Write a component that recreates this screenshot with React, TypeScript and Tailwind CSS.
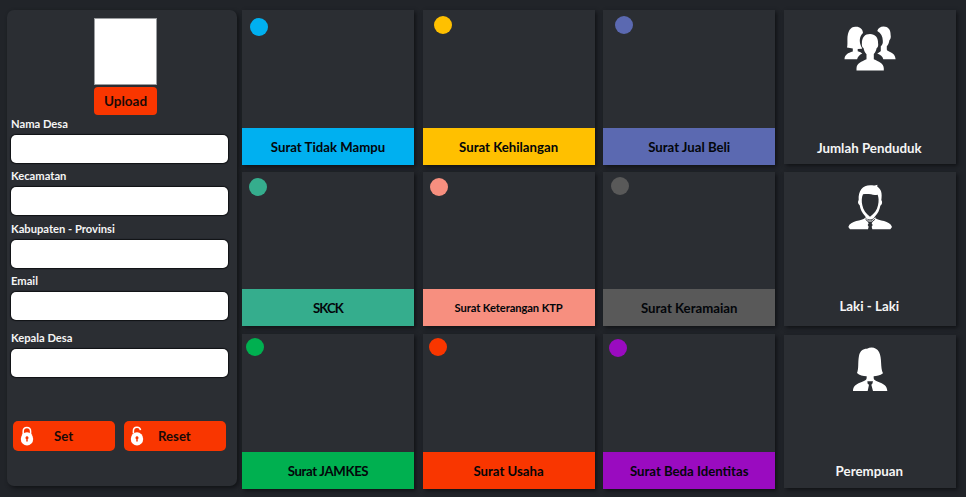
import React from "react";

type Letter = { title: string; card: string; bar: string; dot: string; text?: string };

const columns: Letter[][] = [
  [
    { title: "Surat Tidak Mampu", card: "h-[155px]", bar: "bg-[#00b0f0]", dot: "mt-2 ml-2 bg-[#00b0f0]" },
    { title: "SKCK", card: "h-[154px]", bar: "bg-[#35ad8d]", dot: "mt-1.5 ml-[7px] bg-[#35ad8d]", text: "text-[13.2px] tracking-[-0.9px]" },
    { title: "Surat JAMKES", card: "h-[155px]", bar: "bg-[#00b050]", dot: "mt-1 ml-1 bg-[#00b050]", text: "text-[13.2px] tracking-[-0.35px]" },
  ],
  [
    { title: "Surat Kehilangan", card: "h-[155px]", bar: "bg-[#ffc000]", dot: "mt-1.5 ml-[11.5px] bg-[#ffc000]" },
    { title: "Surat Keterangan KTP", card: "h-[154px]", bar: "bg-[#f78f7f]", dot: "mt-1.5 ml-[7.5px] bg-[#f78f7f]", text: "text-[11.2px] tracking-[-0.1px]" },
    { title: "Surat Usaha", card: "h-[155px]", bar: "bg-[#f93600]", dot: "mt-1 ml-1.5 bg-[#f93600]" },
  ],
  [
    { title: "Surat Jual Beli", card: "h-[155px]", bar: "bg-[#5b69b1]", dot: "mt-1.5 ml-3 bg-[#5b69b1]" },
    { title: "Surat Keramaian", card: "h-[154px]", bar: "bg-[#595959]", dot: "mt-[5px] ml-2 bg-[#595959]" },
    { title: "Surat Beda Identitas", card: "h-[155px]", bar: "bg-[#9a0bc0]", dot: "mt-[5px] ml-[5.5px] bg-[#9a0bc0]" },
  ],
];

function LetterCard({ title, card, bar, dot, text = "text-[13.2px]" }: Letter) {
  return (
    <button className={`flex w-full flex-col bg-[#2b2e33] shadow-[2px_2px_4px_#111316] ${card}`}>
      <span className={`size-[18px] rounded-full ${dot}`} />
      <span className={`mt-auto flex h-[37px] w-full items-center justify-center pt-0.5 font-bold whitespace-nowrap text-[#03060a] ${bar} ${text}`}>
        {title}
      </span>
    </button>
  );
}

function Field({ label, gap }: { label: string; gap: string }) {
  return (
    <label className={`block ${gap}`}>
      <span className="block h-4 text-[11.2px] leading-4 font-bold text-[#f5f5f5]">{label}</span>
      <input className="mt-[3px] -ml-[0.5px] block h-[28px] w-[217px] rounded-[5px] bg-white px-2 text-sm text-black shadow-[0_0_1px_1px_#101215] outline-none" />
    </label>
  );
}

function Padlock({ open = false }: { open?: boolean }) {
  return (
    <svg viewBox="0 0 14 20" className="h-5 w-3.5" fill="none">
      <path
        d={open ? "M3.4 7.5V5C3.4 0.2 10 .2 10.5 4.2" : "M3.2 9V5.2C3.2.1 10.6.1 10.6 5.2V9"}
        stroke="white"
        strokeWidth="1.5"
      />
      <ellipse cx="7" cy="12.9" rx="6.2" ry="6.6" fill="white" />
      <path d="M7 10.3a1.6 1.6 0 0 0-.7 3L6.2 15.6h1.6l-.1-2.3A1.6 1.6 0 0 0 7 10.3Z" fill="#f93600" />
    </svg>
  );
}

function People() {
  return (
    <svg viewBox="0 0 52 45" className="ml-0.5 h-[45px] w-[52px]" fill="white">
      <path d="M.5 33.2c.2-4.4 3.4-6.2 8.3-7.6v-3.1L3 21.6c.6-2.2.4-5 .4-8C3.4 5.5 6.4.8 11.3.8c4.5-.3 7.3 2 7.7 6.2-3.5 3.5-4 8-2.1 12.7.3 1 .6 1.7 1.2 2.2l-.1.8-4.3.4v2.2c2.2.8 3.8 1.3 4.6 2.3-2.8 1.3-4.6 3.3-5.2 5.6Z" />
      <path d="M33.3 4.9C34 2.2 36.5.6 39.6.6c4.4 0 7.1 3 7 8.2l.2 1.7c0 2.1-.9 3.2-1.4 3.7-.5 3-1.4 4.8-2.6 6v3.3c.2 2.8 8.4 1.9 8.8 9.7H39.3c-.6-2.9-2.9-4.6-6.1-5.8 1.4-.8 2.8-1.4 3.6-2.5v-4.7c1.5-1.3 2.3-3.2 2-5.5 0-4.4-1.9-8-5.5-9.8Z" />
      <path d="M12.5 44.5v-2.2c.2-5.3 5.2-6.8 10-9.1v-5c-1.8-1.7-2.6-4.1-3-6.1-1.2-.7-1.9-2.3-1.6-4.6C17.8 11.3 20.9 8 26 8c5.2 0 8.3 3.4 8.1 9.5.4 2.3-.3 3.9-1.5 4.7-.4 2-1.2 4.3-2.8 5.9v5.1c4.8 2.3 9.8 3.9 10 9.1v2.2Z" />
    </svg>
  );
}

function Man() {
  return (
    <svg viewBox="0 0 180 180" className="ml-px size-[60px]" fill="white">
      <path
        fillRule="evenodd"
        d="M59 82C53 77 53 71 56 66C54 40 67 22 91 22C101 22 107 23 112 20L112 26C124 33 127 46 124 66C128 72 127 79 121 83C119 96 113 107 106 114L101 121Q90 128 79 121L75 114C66 105 61 94 59 82ZM69 49C65 57 64 70 67 82C70 97 78 107 90 116C103 107 111 97 114 82C117 68 116 58 113 50C105 52 99 51 93 49C84 48 77 48 69 49Z"
      />
      <path d="M75 112V120C67 129 30 127 25 147L30 154H84L86 146L83 141L86 136L82 130C79 128 76 124 75 120Z" />
      <path d="M106 112V120C114 129 151 127 156 147L151 154H97L95 146L98 141L95 136L99 130C103 128 105 124 106 120Z" />
      <path d="M75 119L86 129H95L106 119" fill="none" stroke="white" strokeWidth="3" />
    </svg>
  );
}

function Woman() {
  return (
    <svg viewBox="0 0 180 180" className="ml-px size-[60px]" fill="white">
      <path d="M51 99C57 84 53 68 57 47C60 33 68 26 81 26C94 19 110 22 117 36C127 55 120 82 129 100C120 107 110 109 101 109V114C102 130 141 123 142 153H39C40 123 79 130 80 114V109C69 108 58 106 51 99Z" />
      <path d="M82 124H99L97 131L94 134L99 153H83L87 134L83 131Z" fill="#2b2e33" />
    </svg>
  );
}

function StatCard({ title, icon, className }: { title: string; icon: React.ReactNode; className: string }) {
  return (
    <section className={`flex w-[172px] flex-col items-center bg-[#2b2e33] pr-px shadow-[2px_2px_4px_#111316] ${className}`}>
      {icon}
      <h2 className="mt-auto text-[13.3px] leading-4 font-bold text-[#f5f5f5]">{title}</h2>
    </section>
  );
}

export default function App() {
  return (
    <main className="flex h-[497px] w-[966px] overflow-hidden bg-[#212429] pt-2.5 pl-[7px] font-['Lato','Liberation_Sans',sans-serif]">
      <aside className="h-[476px] w-[230px] shrink-0 rounded-[7px] bg-[#2b2e33] pl-1 shadow-[2px_2px_4px_#111316]">
        <div className="ml-[83px] flex w-[63px] flex-col gap-0.5 pt-2">
          <div className="h-[67px] border border-[#9b9da0] bg-white" />
          <button className="h-[28px] rounded-[4px] bg-[#f93600] pt-px text-[13.5px] font-bold text-[#190a07]">Upload</button>
        </div>
        <Field label="Nama Desa" gap="mt-px" />
        <Field label="Kecamatan" gap="mt-[5px]" />
        <Field label="Kabupaten - Provinsi" gap="mt-[6px]" />
        <Field label="Email" gap="mt-[5px]" />
        <Field label="Kepala Desa" gap="mt-[10px]" />
        <div className="mt-11 ml-0.5 flex gap-[9px] text-[13.2px] font-bold text-[#190a07]">
          <button className="flex h-[30px] w-[102px] items-center rounded-[5px] bg-[#f93600] pl-[7px]">
            <Padlock />
            <span className="ml-5 pt-px">Set</span>
          </button>
          <button className="flex h-[30px] w-[102px] items-center rounded-[5px] bg-[#f93600] pl-1.5">
            <Padlock open />
            <span className="ml-3.5 pt-px">Reset</span>
          </button>
        </div>
      </aside>
      <div className="ml-[5px] flex gap-[8.6px]">
        {columns.map((letters) => (
          <div key={letters[0].title} className="flex w-[172px] flex-col">
            {letters.map((letter, i) => (
              <div key={letter.title} className={i === 0 ? "" : i === 1 ? "mt-[7px]" : "mt-2"}>
                <LetterCard {...letter} />
              </div>
            ))}
          </div>
        ))}
        <div className="flex flex-col">
          <StatCard title="Jumlah Penduduk" icon={<People />} className="h-[154px] pt-4 pb-2" />
          <StatCard title="Laki - Laki" icon={<Man />} className="mt-2 h-[154px] pt-1.5 pb-3" />
          <StatCard title="Perempuan" icon={<Woman />} className="mt-[9px] h-[153px] pt-[5px] pb-[9px]" />
        </div>
      </div>
    </main>
  );
}
